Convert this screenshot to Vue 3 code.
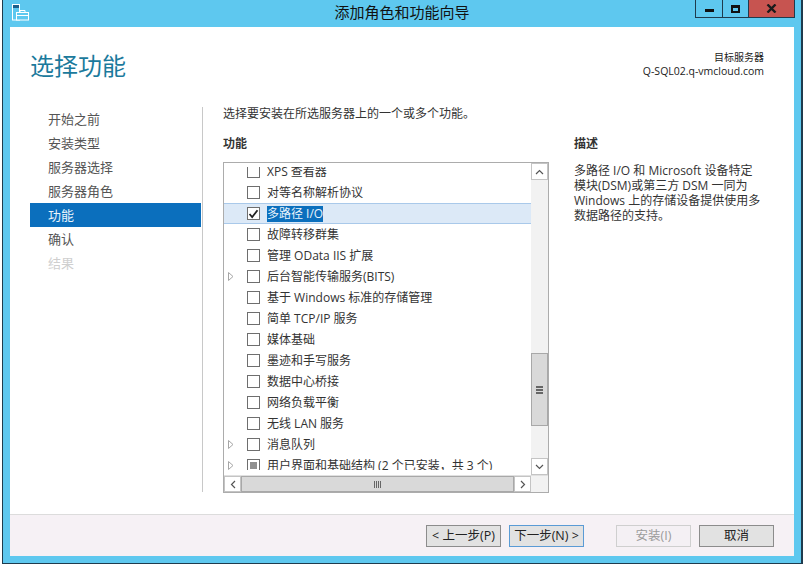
<script setup>
const steps = [
  { label: '开始之前' },
  { label: '安装类型' },
  { label: '服务器选择' },
  { label: '服务器角色' },
  { label: '功能', active: true },
  { label: '确认' },
  { label: '结果', disabled: true },
]
const features = [
  { label: 'XPS 查看器' },
  { label: '对等名称解析协议' },
  { label: '多路径 I/O', checked: true, selected: true },
  { label: '故障转移群集' },
  { label: '管理 OData IIS 扩展' },
  { label: '后台智能传输服务(BITS)', expand: true },
  { label: '基于 Windows 标准的存储管理' },
  { label: '简单 TCP/IP 服务' },
  { label: '媒体基础' },
  { label: '墨迹和手写服务' },
  { label: '数据中心桥接' },
  { label: '网络负载平衡' },
  { label: '无线 LAN 服务' },
  { label: '消息队列', expand: true },
  { label: '用户界面和基础结构 (2 个已安装，共 3 个)', expand: true, partial: true },
]
</script>

<template>
  <div class="window">
    <header class="titlebar">
      <svg class="app-icon" width="17" height="17" viewBox="0 0 17 17">
        <rect x="0.5" y="0.5" width="7" height="15.5" fill="#5ec8ef" stroke="#fff" />
        <rect x="1" y="1" width="6" height="3" fill="#1d5f8a" />
        <rect x="4.5" y="8.5" width="12" height="7.5" fill="#5ec8ef" stroke="#fff" />
        <path d="M8 8V6.5h5V8M5 11.5h11" stroke="#fff" fill="none" />
      </svg>
      <div class="title">添加角色和功能向导</div>
      <div class="controls">
        <button class="ctl min"><i></i></button>
        <button class="ctl max"><i></i></button>
        <button class="ctl close">
          <svg width="11" height="9" viewBox="0 0 11 9"><path d="M1.5 0.5 9.5 8.5M9.5 0.5 1.5 8.5" stroke="#1b1b1b" stroke-width="2.4" fill="none" /></svg>
        </button>
      </div>
    </header>

    <div class="client">
      <main class="page">
        <div class="head">
          <h1>选择功能</h1>
          <div class="target">
            <div class="t1">目标服务器</div>
            <div class="t2">Q-SQL02.q-vmcloud.com</div>
          </div>
        </div>

        <div class="body">
          <nav class="steps">
            <div v-for="s in steps" :key="s.label" class="step" :class="{ active: s.active, disabled: s.disabled }">{{ s.label }}</div>
          </nav>

          <section class="content">
            <p class="intro">选择要安装在所选服务器上的一个或多个功能。</p>
            <div class="columns">
              <div class="left">
                <h2>功能</h2>
                <div class="listbox">
                  <div class="upper">
                    <div class="viewport">
                      <div class="clip">
                        <div class="rows">
                          <div v-for="f in features" :key="f.label" class="row" :class="{ selected: f.selected }">
                            <span class="expander">
                              <svg v-if="f.expand" width="6" height="9" viewBox="0 0 6 9"><path d="M0.5 0.5 5 4.5 0.5 8.5Z" fill="#fff" stroke="#a6a6a6" /></svg>
                            </span>
                            <span class="check">
                              <svg v-if="f.checked" width="11" height="10" viewBox="0 0 11 10"><path d="M1.5 5 4.2 8 9.5 1.2" stroke="#222" stroke-width="1.8" fill="none" /></svg>
                              <i v-if="f.partial"></i>
                            </span>
                            <span class="label">{{ f.label }}</span>
                          </div>
                        </div>
                      </div>
                    </div>
                    <div class="vbar">
                      <div class="arrow">
                        <svg width="9" height="6" viewBox="0 0 9 6"><path d="M1 5 4.5 1.5 8 5" stroke="#555" stroke-width="1.2" fill="none" /></svg>
                      </div>
                      <div class="vtrack">
                        <div class="vthumb"><b></b><b></b><b></b></div>
                      </div>
                      <div class="arrow">
                        <svg width="9" height="6" viewBox="0 0 9 6"><path d="M1 1 4.5 4.5 8 1" stroke="#555" stroke-width="1.2" fill="none" /></svg>
                      </div>
                    </div>
                  </div>
                  <div class="hbar">
                    <div class="harrow">
                      <svg width="6" height="9" viewBox="0 0 6 9"><path d="M5 1 1.5 4.5 5 8" stroke="#555" stroke-width="1.2" fill="none" /></svg>
                    </div>
                    <div class="hthumb"><b></b><b></b><b></b><b></b></div>
                    <div class="harrow">
                      <svg width="6" height="9" viewBox="0 0 6 9"><path d="M1 1 4.5 4.5 1 8" stroke="#555" stroke-width="1.2" fill="none" /></svg>
                    </div>
                    <div class="corner"></div>
                  </div>
                </div>
              </div>
              <aside class="desc">
                <h2>描述</h2>
                <p>多路径 I/O 和 Microsoft 设备特定模块(DSM)或第三方 DSM 一同为 Windows 上的存储设备提供使用多数据路径的支持。</p>
              </aside>
            </div>
          </section>
        </div>
      </main>

      <footer class="footer">
        <button class="btn">&lt; 上一步(P)</button>
        <button class="btn focus">下一步(N) &gt;</button>
        <button class="btn off gap">安装(I)</button>
        <button class="btn">取消</button>
      </footer>
    </div>
  </div>
</template>

<style>
html, body { margin: 0; background: #fff; }
</style>

<style scoped>
* { box-sizing: border-box; }
.window {
  width: 801px;
  height: 564px;
  margin-left: 2px;
  background: #5ec8ef;
  border: 1px solid #1f3b4d;
  border-width: 0 2px 1px 1px;
  padding: 0 7px 7px 7px;
  display: flex;
  flex-direction: column;
  font-family: "Open Sans", "Noto Sans CJK SC", sans-serif;
  color: #333;
  overflow: hidden;
}
.titlebar {
  height: 27px;
  flex: none;
  display: flex;
  position: relative;
  align-items: flex-start;
  justify-content: space-between;
}
.app-icon { margin: 4px 0 0 2px; }
.title {
  position: absolute;
  left: 0;
  right: 0;
  top: 2px;
  text-align: center;
  font-size: 15px;
  line-height: 20px;
  color: #111;
}
.controls { display: flex; position: relative; height: 18px; margin-right: -1px; }
.ctl {
  border: 1px solid #1f3b4d;
  border-top: 0;
  border-left-width: 1px;
  padding: 0;
  background: #5ec8ef;
  display: flex;
  align-items: center;
  justify-content: center;
  height: 18px;
}
.ctl + .ctl { border-left: 0; }
.min { width: 28px; }
.min i { display: block; width: 9px; height: 3px; background: #111; margin-top: 3px; }
.max { width: 26px; }
.max i { display: block; width: 9px; height: 8px; border: 2px solid #111; border-top-width: 3px; }
.close { width: 46px; background: #c75450; }
.client {
  flex: 1;
  display: flex;
  flex-direction: column;
  background: #fff;
  min-height: 0;
}
.page { flex: 1; min-height: 0; padding: 0 0 0 20px; display: flex; flex-direction: column; }
.head { height: 80px; flex: none; display: flex; justify-content: space-between; }
h1 {
  margin: 21px 0 0;
  font-size: 24px;
  line-height: 36px;
  font-weight: 400;
  color: #1b7a9c;
}
.target { padding: 24px 30px 0 0; text-align: right; color: #222; }
.t1 { font-size: 10px; line-height: 13px; }
.t2 { font-size: 10.5px; line-height: 14px; }
.body { flex: 1; min-height: 0; display: flex; }
.steps { width: 171px; flex: none; }
.step {
  height: 24px;
  padding-left: 18px;
  font-size: 13px;
  line-height: 24px;
  color: #555;
}
.step.active { background: #0b6fbd; color: #e8f3fb; }
.step.disabled { color: #cfcfcf; }
.content {
  flex: 1;
  min-width: 0;
  height: 385px;
  margin-left: 1px;
  border-left: 1px solid #c8c8c8;
  padding-left: 20px;
}
.intro { margin: 0; font-size: 12px; line-height: 14px; height: 30px; color: #333; }
.columns { display: flex; gap: 25px; }
.left { width: 326px; flex: none; }
h2 { margin: 0; height: 25px; font-size: 12px; line-height: 14px; font-weight: 700; color: #333; }
.listbox {
  height: 331px;
  border: 1px solid #acacac;
  display: flex;
  flex-direction: column;
}
.upper { flex: 1; min-height: 0; display: flex; }
.viewport { flex: 1; min-width: 0; padding: 4px 0 5px; }
.clip { height: 100%; overflow: hidden; }
.rows { margin-top: -6px; }
.row {
  height: 21px;
  display: flex;
  align-items: center;
  border: 1px solid transparent;
  border-width: 1px 0;
}
.row.selected { background: #dce9f7; border-color: #a9c9ea; }
.expander { width: 23px; flex: none; display: flex; padding-left: 4px; }
.check {
  width: 13px;
  height: 13px;
  flex: none;
  border: 1px solid #6e6e6e;
  background: #fff;
  display: flex;
  align-items: center;
  justify-content: center;
}
.check i { width: 7px; height: 7px; background: #8f8f8f; display: block; }
.label { margin-left: 7px; font-size: 12px; line-height: 16px; white-space: nowrap; color: #333; }
.selected .label { background: #0b6fbd; color: #e8f3fb; }
.vbar {
  width: 17px;
  flex: none;
  background: #f2f2f2;
  display: flex;
  flex-direction: column;
}
.arrow { height: 17px; flex: none; display: flex; align-items: center; justify-content: center; background: #fff; border: 1px solid #c4c4c4; }
.vtrack { flex: 1; padding-top: 173px; }
.vthumb {
  height: 73px;
  background: #d9d9d9;
  border: 1px solid #a8a8a8;
  display: flex;
  flex-direction: column;
  align-items: center;
  justify-content: center;
  gap: 1px;
}
.vthumb b { display: block; width: 7px; height: 2px; background: #666; }
.hbar { height: 17px; flex: none; display: flex; background: #f2f2f2; border-top: 1px solid #e0e0e0; }
.harrow { width: 17px; flex: none; display: flex; align-items: center; justify-content: center; background: #fff; border: 1px solid #c4c4c4; }
.hthumb {
  flex: 1;
  background: #d9d9d9;
  border: 1px solid #a8a8a8;
  display: flex;
  align-items: center;
  justify-content: center;
  gap: 1px;
}
.hthumb b { display: block; width: 1px; height: 7px; background: #666; }
.corner { width: 17px; flex: none; background: #f2f2f2; }
.desc { flex: 1; min-width: 0; padding-right: 31px; }
.desc p { margin: 0; font-size: 12px; line-height: 15px; color: #333; padding-top: 1px; }
.footer {
  height: 42px;
  flex: none;
  background: #f6f1f5;
  border-top: 1px solid #dcdcdc;
  display: flex;
  align-items: center;
  justify-content: flex-end;
  gap: 8px;
  padding: 0 20px 0 0;
}
.btn {
  width: 75px;
  height: 22px;
  padding: 0;
  border: 1px solid #8c8c8c;
  background: #e2e2e2;
  font-family: inherit;
  font-size: 12.5px;
  line-height: 18px;
  color: #222;
}
.btn.focus { border-color: #5a9bd5; border-width: 1.5px; }
.btn.off { background: #f4f0f4; border-color: #cfcfcf; color: #9b9b9b; }
.gap { margin-left: 24px; }
</style>
